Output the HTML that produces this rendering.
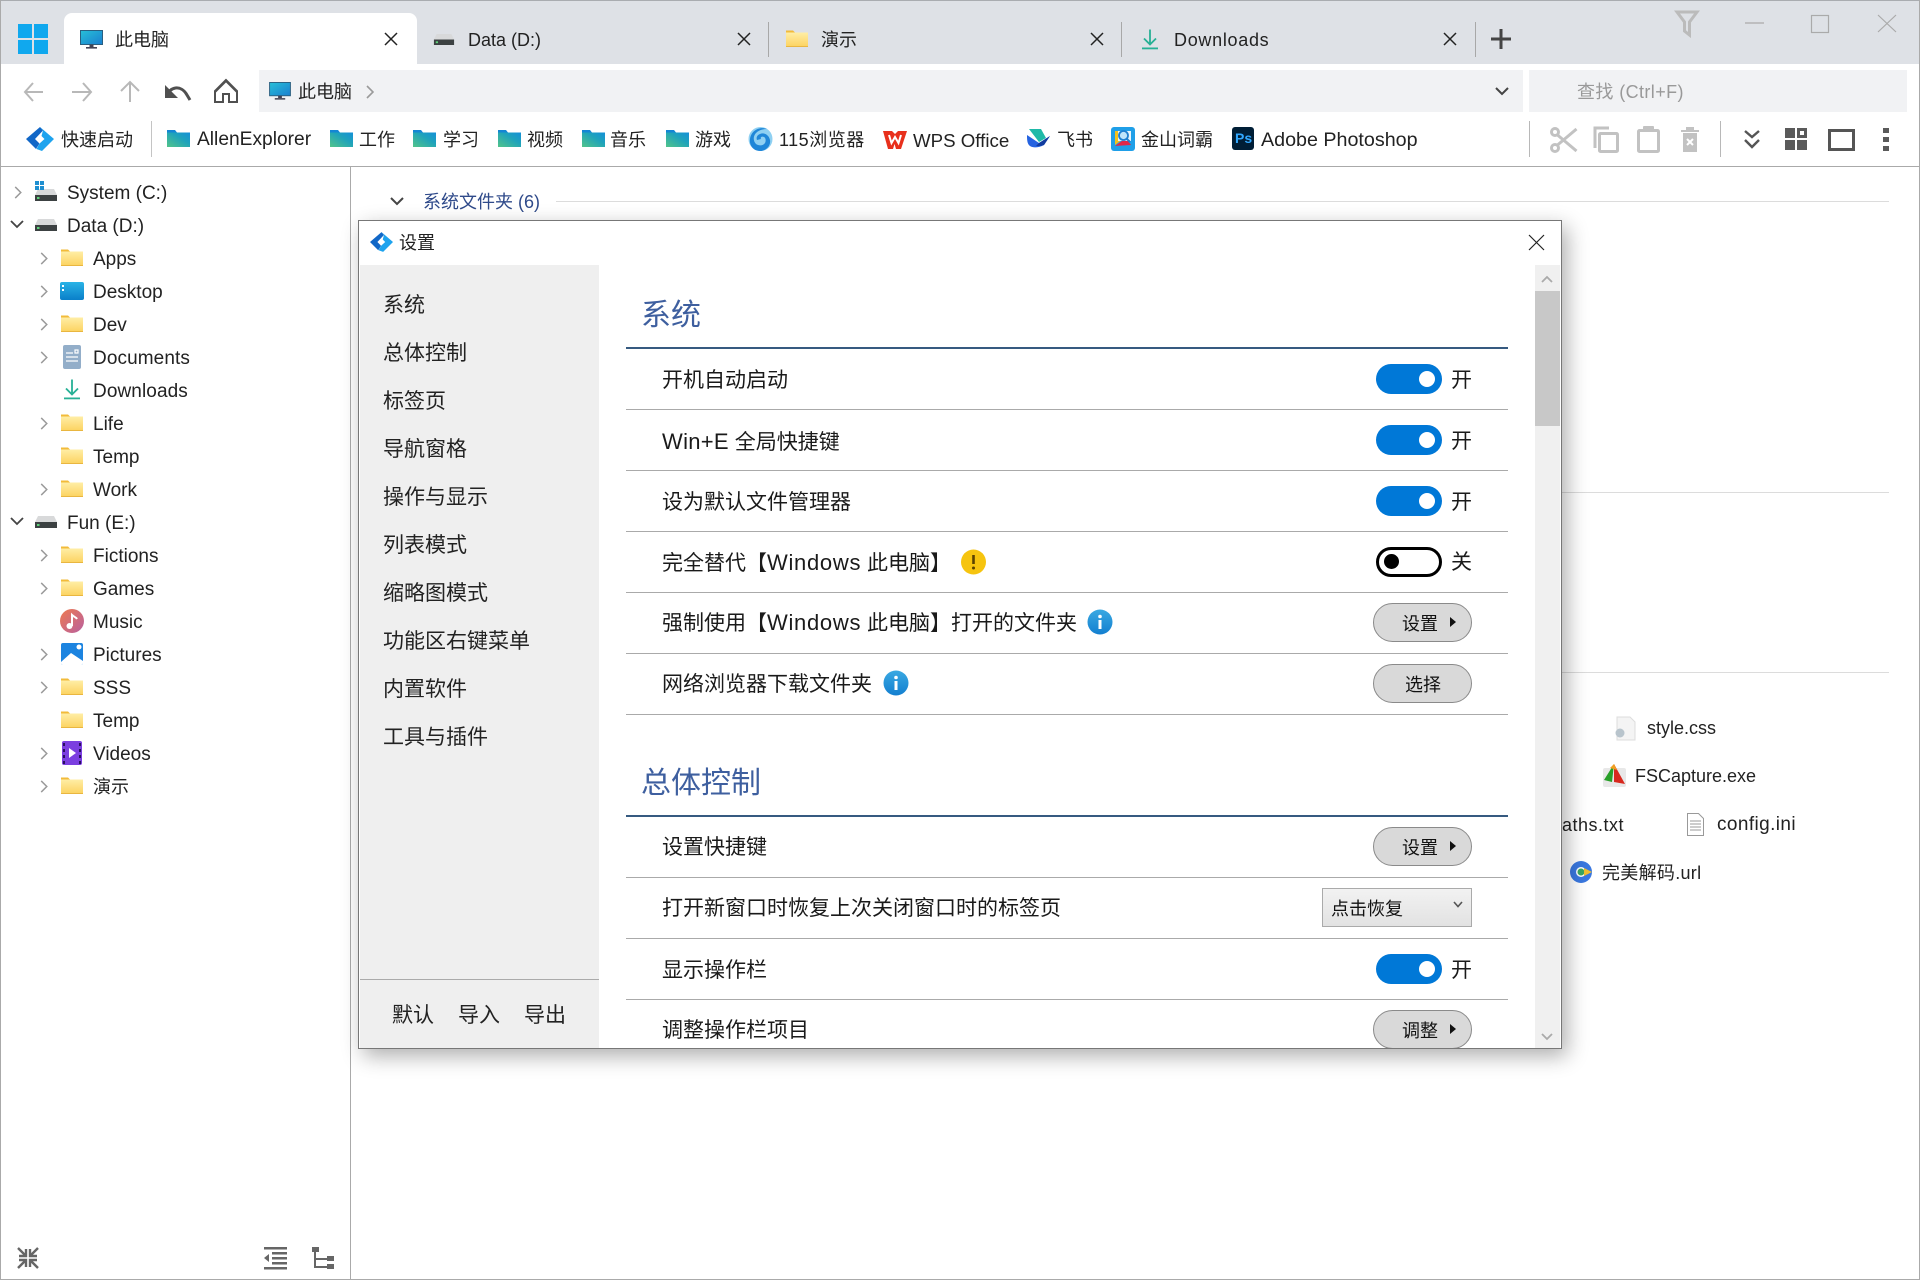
<!DOCTYPE html>
<html lang="zh-CN"><head><meta charset="utf-8"><title>AllenExplorer</title>
<style>
html,body{margin:0;padding:0;width:1920px;height:1280px;overflow:hidden;background:#fff}
body{position:relative;font-family:"Liberation Sans","Noto Sans CJK SC",sans-serif;color:#222}
.b{position:absolute}
.t{position:absolute;white-space:nowrap;line-height:0;font-size:18px}
svg.l{position:absolute;left:0;top:0;width:1920px;height:1280px;overflow:visible}
.tr{font-size:19px;margin-top:2px}
.n{font-size:21px;left:383px;color:#222;margin-top:2px}
.r{font-size:21px;left:662px;color:#1a1a1a;margin-top:2px}
.r span{font-size:22px}
.r span.w{letter-spacing:.7px}
.bk{font-size:18px;margin-top:1px}
.h{position:absolute;left:626px;width:882px;height:1px;background:#aaa}
.sec{font-size:30px;left:641px;color:#3e5f9f;margin-top:3px}
.hh{position:absolute;left:626px;width:882px;height:2px;background:#365a80}
.tg{position:absolute;left:1376px;width:66px;height:30px;border-radius:15px;background:#0078d7}
.tg i{position:absolute;left:43px;top:7px;width:16px;height:16px;border-radius:50%;background:#fff}
.tg.off{box-sizing:border-box;background:#fff;border:3.5px solid #000}
.tg.off i{left:5px;top:3.5px;width:15px;height:15px;background:#000}
.btn{position:absolute;box-sizing:border-box;left:1373px;width:99px;height:39px;border-radius:19.5px;background:#d9d9d9;border:1px solid #8a8a8a}
.btn i{position:absolute;left:76px;top:13px;width:0;height:0;border-left:6px solid #111;border-top:5px solid transparent;border-bottom:5px solid transparent}
.bt{font-size:18px;color:#111;margin-top:2px}
.f{font-size:18px;color:#222}
</style></head><body>

<div class="b" style="left:0;top:0;width:1920px;height:64px;background:#dee1e6"></div>
<div class="b" style="left:0;top:0;width:1920px;height:1px;background:#a9acb0"></div>
<div class="b" style="left:64px;top:13px;width:353px;height:51px;background:#fff;border-radius:8px 8px 0 0"></div>
<div class="b" style="left:259px;top:70px;width:1264px;height:42px;background:#f1f2f4"></div>
<div class="b" style="left:1529px;top:70px;width:378px;height:42px;background:#f1f2f4"></div>
<div class="b" style="left:0;top:166px;width:1920px;height:1px;background:#aaa"></div>
<div class="b" style="left:350px;top:166px;width:1px;height:1114px;background:#aaa"></div>
<div class="b" style="left:0;top:0;width:1px;height:1280px;background:#aaa"></div>
<div class="b" style="left:1919px;top:0;width:1px;height:1280px;background:#aaa"></div>
<div class="b" style="left:0;top:1279px;width:1920px;height:1px;background:#aaa"></div>
<div class="b" style="left:768px;top:22px;width:1px;height:35px;background:#a8a8a8"></div>
<div class="b" style="left:1121px;top:22px;width:1px;height:35px;background:#a8a8a8"></div>
<div class="b" style="left:1475px;top:22px;width:1px;height:35px;background:#a8a8a8"></div>
<div class="b" style="left:151px;top:121px;width:1px;height:36px;background:#c4c4c4"></div>
<div class="b" style="left:1529px;top:121px;width:1px;height:36px;background:#b8b8b8"></div>
<div class="b" style="left:1720px;top:121px;width:1px;height:36px;background:#b8b8b8"></div>
<div class="b" style="left:556px;top:201px;width:1333px;height:1px;background:#dcdcdc"></div>
<div class="b" style="left:1560px;top:492px;width:329px;height:1px;background:#dcdcdc"></div>
<div class="b" style="left:1560px;top:672px;width:329px;height:1px;background:#dcdcdc"></div>

<svg class="l" viewBox="0 0 1920 1280" xmlns="http://www.w3.org/2000/svg">
<defs>
<linearGradient id="gf" x1="0" y1="0" x2="0" y2="1"><stop offset="0" stop-color="#ffeea6"/><stop offset="1" stop-color="#fcd25f"/></linearGradient>
<linearGradient id="gt" x1="0" y1="1" x2="1" y2="0"><stop offset="0" stop-color="#52c48a"/><stop offset=".6" stop-color="#1fa3bb"/><stop offset="1" stop-color="#1590d8"/></linearGradient>
<linearGradient id="gm" x1="0" y1="0" x2="1" y2="1"><stop offset="0" stop-color="#27c0d8"/><stop offset="1" stop-color="#1a7fd0"/></linearGradient>
<linearGradient id="gd" x1="0" y1="0" x2="0" y2="1"><stop offset="0" stop-color="#2ab3e6"/><stop offset="1" stop-color="#0a7fc9"/></linearGradient>
<linearGradient id="gi" x1="0" y1="0" x2="0" y2="1"><stop offset="0" stop-color="#3aa9e2"/><stop offset="1" stop-color="#137fd0"/></linearGradient>
<linearGradient id="gmu" x1="0" y1="0" x2="1" y2="1"><stop offset="0" stop-color="#ee7a50"/><stop offset="1" stop-color="#b860a0"/></linearGradient>
<symbol id="folder" viewBox="0 0 22 17"><path d="M0 0.5h7l2 2H0z" fill="#f2bb3a"/><rect y="2.5" width="22" height="14.5" fill="url(#gf)"/><rect y="16" width="22" height="1" fill="#e9b640"/></symbol>
<symbol id="tfolder" viewBox="0 0 23 17"><path d="M0 0h8l2 2.5H0z" fill="#1486d4"/><rect y="2.5" width="23" height="14.5" fill="url(#gt)"/></symbol>
<symbol id="mon" viewBox="0 0 23 19"><rect x=".5" y=".5" width="22" height="14" fill="url(#gm)" stroke="#2a5f80"/><rect x="9.5" y="14.5" width="4" height="2.5" fill="#445"/><rect x="6" y="17" width="11" height="1.6" fill="#445"/></symbol>
<symbol id="drive" viewBox="0 0 22 12"><path d="M3 0h16l3 6H0z" fill="#d8d9da"/><rect y="6" width="22" height="6" fill="#3c4142"/><rect x="2" y="8" width="2.5" height="2" fill="#5fd07a"/></symbol>
<symbol id="dl" viewBox="0 0 16 20"><path d="M8 0v15M2 9l6 6 6-6" fill="none" stroke="#27b095" stroke-width="1.8"/><rect y="18" width="16" height="1.8" fill="#27b095"/></symbol>
<symbol id="logo" viewBox="0 0 28 24"><path d="M14 0 0 12l10 10 3.500-5.500L9 12l8-8.500z" fill="#1167c7"/><path d="M17 3.500 14 0l14 12-12 12-5.500-2 3-5.500 5-4.500-3-3z" fill="#1ea3ee"/><path d="M15.500 7l-4 5 3 1-1.500 4 4.500-5.500-3-1z" fill="#fff"/></symbol>
<symbol id="chev" viewBox="0 0 8 14"><path d="M1 1l6 6-6 6" fill="none" stroke="#9a9a9a" stroke-width="1.6"/></symbol>
<symbol id="xx" viewBox="0 0 14 14"><path d="M1 1l12 12M13 1L1 13" fill="none" stroke="#222" stroke-width="1.500"/></symbol>
</defs>

<!-- window tabs -->
<g fill="#10a8ee"><rect x="18" y="24" width="14" height="14"/><rect x="34" y="24" width="14" height="14"/><rect x="18" y="40" width="14" height="14"/><rect x="34" y="40" width="14" height="14"/></g>
<use href="#mon" x="80" y="30" width="23" height="19"/>
<use href="#xx" x="384" y="32" width="14" height="14"/>
<use href="#drive" x="433" y="34" width="22" height="11"/>
<use href="#xx" x="737" y="32" width="14" height="14"/>
<use href="#folder" x="786" y="30" width="22" height="17"/>
<use href="#xx" x="1090" y="32" width="14" height="14"/>
<use href="#dl" x="1142" y="29" width="16" height="21"/>
<use href="#xx" x="1443" y="32" width="14" height="14"/>
<path d="M1501 29v20M1491 39h20" stroke="#444" stroke-width="3"/>
<!-- window buttons -->
<path d="M1677 12h20l-7.500 10v13l-5-4v-9z" fill="none" stroke="#bbb" stroke-width="3"/>
<path d="M1745 23h19" stroke="#aaa" stroke-width="1.200"/>
<rect x="1811.500" y="15.500" width="17" height="17" fill="none" stroke="#aaa" stroke-width="1.200"/>
<path d="M1878 15l18 17M1896 15l-18 17" stroke="#aaa" stroke-width="1.200"/>
<!-- nav -->
<path d="M43 92H25M33 83l-8 9 8 9" fill="none" stroke="#b8b8b8" stroke-width="2"/>
<path d="M72 92h19M83 83l8 9-8 9" fill="none" stroke="#b8b8b8" stroke-width="2"/>
<path d="M130 102V83M121 91l9-9 9 9" fill="none" stroke="#b8b8b8" stroke-width="2"/>
<path d="M167 96c2-9 14-12 20-1l3 5" fill="none" stroke="#505050" stroke-width="3"/><path d="M165 85v13h13z" fill="#505050"/>
<path d="M226 80l-11 11v11h8v-8h6v8h8V91z M215 92l11-11 11 11" fill="none" stroke="#505050" stroke-width="2"/>
<use href="#mon" x="269" y="82" width="22" height="18"/>
<use href="#chev" x="366" y="85" width="8" height="14"/>
<path d="M1496 88l6 6 6-6" fill="none" stroke="#444" stroke-width="2"/>
<!-- bookmarks -->
<use href="#logo" x="26" y="127" width="28" height="24"/>
<use href="#tfolder" x="167" y="130" width="23" height="17"/>
<use href="#tfolder" x="330" y="130" width="23" height="17"/>
<use href="#tfolder" x="413" y="130" width="23" height="17"/>
<use href="#tfolder" x="498" y="130" width="23" height="17"/>
<use href="#tfolder" x="582" y="130" width="23" height="17"/>
<use href="#tfolder" x="666" y="130" width="23" height="17"/>
<!-- 115 swirl -->
<circle cx="760.500" cy="139" r="12" fill="#8fd0f2"/>
<path d="M767 129c-8-3-16 2-17 10-1 7 4 12 10 12 6 0 11-5 10-11-1-5-6-8-10-6-3 1-4 4-3 6l4-1c-1-2 1-3 3-2 2 1 2 4 1 6-2 3-6 3-9 1-3-3-3-8 0-11 3-3 7-4 11-4z" fill="#1f86d8"/>
<!-- WPS -->
<path d="M883 131h9l3 3 3-3h9l-6 18h-5l-1.500-5-1.500 5h-5z" fill="#e8301c"/><path d="M889 135l2.500 8 3.500-6 3.500 6 2.500-8" fill="none" stroke="#fff" stroke-width="2"/>
<!-- Feishu -->
<path d="M1029 129h12l5 9-7 4z" fill="#1fb9a8"/><path d="M1027 135l12 8 11-7-6 9c-6 3-11 3-14 1-3-2-3-7-3-11z" fill="#2563e0"/><path d="M1039 143l11-7-6 9c-3 1-5 1-8 1z" fill="#123c9e"/>
<!-- Jinshan -->
<rect x="1111" y="127" width="24" height="24" rx="3" fill="#1f9fe8"/><path d="M1115 131h8v8l-8 6z" fill="#f4c21c"/><path d="M1115 146l11-8 5 7z" fill="#e0284a"/><path d="M1118 131h13v10h-13z" fill="#e8f4fc"/><circle cx="1123.500" cy="135.500" r="4.500" fill="#bfe4fa" stroke="#1f7fd0" stroke-width="1.800"/><path d="M1127 139l3 3" stroke="#1f7fd0" stroke-width="2"/>
<rect x="1232" y="127" width="22" height="23" rx="3" fill="#001e36"/>
<!-- right tools -->
<g fill="none" stroke="#c2c2c2" stroke-width="3"><circle cx="1555" cy="132" r="3.500"/><circle cx="1555" cy="148" r="3.500"/><path d="M1557.500 135l19 16M1557.500 145l19-16"/>
<path d="M1609 128h-14v20"/><rect x="1599.500" y="133.500" width="18" height="18" rx="1"/>
<rect x="1638.500" y="130.500" width="20" height="21" rx="1"/></g>
<rect x="1643" y="126" width="11" height="6" rx="1" fill="#c2c2c2"/>
<path d="M1681 130h18v2h-18zM1686 127h8v3h-8zM1683 133h14v19h-14z" fill="#c2c2c2"/><path d="M1687 139l6 6M1693 139l-6 6" stroke="#fff" stroke-width="2"/>
<path d="M1745 131l7 6 7-6M1745 140l7 7 7-7" fill="none" stroke="#555" stroke-width="2.400"/>
<g fill="#5a5a5a"><rect x="1785" y="128" width="10" height="10"/><path d="M1797 128h10v10h-10zM1800 131v4h4v-4z" fill-rule="evenodd"/><rect x="1785" y="140" width="10" height="10"/><rect x="1797" y="140" width="10" height="10"/></g>
<rect x="1829.500" y="130.500" width="24" height="19" fill="none" stroke="#555" stroke-width="3"/>
<g fill="#5a5a5a"><rect x="1883" y="128" width="6" height="5"/><rect x="1883" y="137" width="6" height="5"/><rect x="1883" y="146" width="6" height="5"/></g>
<!-- tree chevrons -->
<use href="#chev" x="14" y="186" width="8" height="13"/>
<path d="M11 221l6 6 6-6" fill="none" stroke="#444" stroke-width="1.800"/>
<path d="M11 518l6 6 6-6" fill="none" stroke="#444" stroke-width="1.800"/>
<use href="#chev" x="40" y="252" width="8" height="13"/><use href="#chev" x="40" y="285" width="8" height="13"/><use href="#chev" x="40" y="318" width="8" height="13"/><use href="#chev" x="40" y="351" width="8" height="13"/><use href="#chev" x="40" y="417" width="8" height="13"/><use href="#chev" x="40" y="483" width="8" height="13"/><use href="#chev" x="40" y="549" width="8" height="13"/><use href="#chev" x="40" y="582" width="8" height="13"/><use href="#chev" x="40" y="648" width="8" height="13"/><use href="#chev" x="40" y="681" width="8" height="13"/><use href="#chev" x="40" y="747" width="8" height="13"/><use href="#chev" x="40" y="780" width="8" height="13"/>
<!-- tree icons -->
<use href="#drive" x="35" y="189" width="22" height="12"/>
<g fill="#1f8fd0"><rect x="35" y="181" width="4" height="4"/><rect x="40" y="181" width="4" height="4"/><rect x="35" y="186" width="4" height="4"/><rect x="40" y="186" width="4" height="4"/></g>
<use href="#drive" x="35" y="219" width="22" height="12"/>
<use href="#folder" x="61" y="249" width="22" height="17"/>
<rect x="60" y="282" width="24" height="18" rx="2" fill="url(#gd)"/><rect x="62" y="285" width="2" height="2" fill="#fff"/><rect x="62" y="289" width="2" height="2" fill="#fff"/>
<use href="#folder" x="61" y="315" width="22" height="17"/>
<rect x="63" y="345" width="18" height="24" rx="2" fill="#93aec9"/><path d="M66 353h7M66 357h12M66 361h12M75 350h3v3h-3z" stroke="#fff" stroke-width="1.200" fill="none"/>
<use href="#dl" x="64" y="379" width="16" height="21"/>
<use href="#folder" x="61" y="414" width="22" height="17"/>
<use href="#folder" x="61" y="447" width="22" height="17"/>
<use href="#folder" x="61" y="480" width="22" height="17"/>
<use href="#drive" x="35" y="516" width="22" height="12"/>
<use href="#folder" x="61" y="546" width="22" height="17"/>
<use href="#folder" x="61" y="579" width="22" height="17"/>
<circle cx="72" cy="621" r="12" fill="url(#gmu)"/><path d="M72 626v-11c2 2 4 2 5 4" fill="none" stroke="#fff" stroke-width="2"/><circle cx="69.500" cy="626" r="3" fill="#fff"/>
<rect x="61" y="643" width="22" height="22" rx="2" fill="#1c84e0"/><path d="M61 662l10-9 12 8v2a2 2 0 0 1-2 2H63a2 2 0 0 1-2-2z" fill="#fff"/><circle cx="79" cy="647" r="2.500" fill="#fff"/>
<use href="#folder" x="61" y="678" width="22" height="17"/>
<use href="#folder" x="61" y="711" width="22" height="17"/>
<rect x="62" y="741" width="20" height="24" rx="2" fill="#7b3fe0"/><path d="M69 748l7 5-7 5z" fill="#fff"/><g fill="#2a1060"><rect x="63" y="743" width="2" height="3"/><rect x="63" y="749" width="2" height="3"/><rect x="63" y="755" width="2" height="3"/><rect x="63" y="761" width="2" height="3"/><rect x="79" y="743" width="2" height="3"/><rect x="79" y="749" width="2" height="3"/><rect x="79" y="755" width="2" height="3"/><rect x="79" y="761" width="2" height="3"/></g>
<use href="#folder" x="61" y="777" width="22" height="17"/>
<!-- bottom -->
<g fill="none" stroke="#666" stroke-width="2.400"><path d="M18 1248l8 8M26 1249v7h-7M38 1248l-8 8M30 1249v7h7M18 1268l8-8M26 1267v-7h-7M38 1268l-8-8M30 1267v-7h7"/></g>
<g fill="#666"><rect x="264" y="1247" width="23" height="2.500"/><rect x="272" y="1252" width="15" height="2.500"/><rect x="272" y="1257" width="15" height="2.500"/><rect x="272" y="1262" width="15" height="2.500"/><rect x="264" y="1267" width="23" height="2.500"/><path d="M269 1254v8l-5-4z"/>
<rect x="312" y="1247" width="7" height="5"/><rect x="327" y="1256" width="7" height="5"/><rect x="327" y="1264" width="7" height="5"/><path d="M314 1252h2v6h11v2h-11v6h11v2h-13z"/></g>
<!-- section chevron -->
<path d="M391 198l6 6 6-6" fill="none" stroke="#444" stroke-width="2"/>
<!-- files -->
<path d="M1617 717h13l5 5v18h-18z" fill="#f4f4f4" stroke="#ddd"/><circle cx="1620" cy="733" r="4.500" fill="#b8c4cc"/>
<rect x="1603" y="768" width="23" height="19" rx="2" fill="#e8e8e8"/><path d="M1614 764l-10 16 8 2z" fill="#28a028"/><path d="M1614 764l11 20-11-2z" fill="#d8281e"/><path d="M1610 768l4-4 3 6z" fill="#f0a020"/>
<path d="M1687.500 813.500h11l5 5v17h-16z M1690 821h11M1690 824h11M1690 827h11M1690 830h11" fill="#fff" stroke="#999" stroke-width="1"/>
<circle cx="1581" cy="872" r="11" fill="#3a78e0"/><circle cx="1581" cy="872" r="5" fill="#fff"/><circle cx="1581" cy="872" r="3.500" fill="#3aa860"/><path d="M1584 868l8 4-8 4z" fill="#f0c030"/>
</svg>

<!-- top texts -->
<div class="t" style="left:115px;top:40px">此电脑</div>
<div class="t" style="left:468px;top:40px">Data (D:)</div>
<div class="t" style="left:821px;top:40px">演示</div>
<div class="t" style="left:1174px;top:40px;letter-spacing:.7px">Downloads</div>
<div class="t" style="left:298px;top:92px">此电脑</div>
<div class="t" style="left:1577px;top:92px;color:#999;letter-spacing:.4px">查找 (Ctrl+F)</div>
<div class="t bk" style="left:61px;top:139px">快速启动</div>
<div class="t bk" style="left:197px;top:139px;font-size:19.200px">AllenExplorer</div>
<div class="t bk" style="left:359px;top:139px">工作</div>
<div class="t bk" style="left:443px;top:139px">学习</div>
<div class="t bk" style="left:527px;top:139px">视频</div>
<div class="t bk" style="left:610px;top:139px">音乐</div>
<div class="t bk" style="left:695px;top:139px">游戏</div>
<div class="t bk" style="left:779px;top:139px;letter-spacing:.5px">115浏览器</div>
<div class="t bk" style="left:913px;top:140px;font-size:18.700px">WPS Office</div>
<div class="t bk" style="left:1057px;top:139px">飞书</div>
<div class="t bk" style="left:1141px;top:139px">金山词霸</div>
<div class="t bk" style="left:1261px;top:139px;font-size:19.700px">Adobe Photoshop</div>
<div class="t" style="left:1235px;top:138px;font-size:14px;font-weight:bold;color:#31a8ff">Ps</div>
<!-- tree -->
<div class="t tr" style="left:67px;top:192px">System (C:)</div>
<div class="t tr" style="left:67px;top:225px">Data (D:)</div>
<div class="t tr" style="left:93px;top:258px">Apps</div>
<div class="t tr" style="left:93px;top:291px">Desktop</div>
<div class="t tr" style="left:93px;top:324px">Dev</div>
<div class="t tr" style="left:93px;top:357px;letter-spacing:.1px">Documents</div>
<div class="t tr" style="left:93px;top:390px;letter-spacing:.1px">Downloads</div>
<div class="t tr" style="left:93px;top:423px">Life</div>
<div class="t tr" style="left:93px;top:456px">Temp</div>
<div class="t tr" style="left:93px;top:489px">Work</div>
<div class="t tr" style="left:67px;top:522px">Fun (E:)</div>
<div class="t tr" style="left:93px;top:555px">Fictions</div>
<div class="t tr" style="left:93px;top:588px">Games</div>
<div class="t tr" style="left:93px;top:621px">Music</div>
<div class="t tr" style="left:93px;top:654px">Pictures</div>
<div class="t tr" style="left:93px;top:687px">SSS</div>
<div class="t tr" style="left:93px;top:720px">Temp</div>
<div class="t tr" style="left:93px;top:753px">Videos</div>
<div class="t tr" style="left:93px;top:785px;font-size:18px">演示</div>
<div class="t" style="left:423px;top:202px;color:#2f4a8a">系统文件夹 (6)</div>
<!-- files -->
<div class="t f" style="left:1647px;top:728px">style.css</div>
<div class="t f" style="left:1635px;top:776px">FSCapture.exe</div>
<div class="t f" style="left:1562px;top:825px;letter-spacing:.5px">aths.txt</div>
<div class="t f" style="left:1717px;top:825px;font-size:19px;letter-spacing:.4px">config.ini</div>
<div class="t f" style="left:1602px;top:873px;letter-spacing:.3px">完美解码.url</div>

<!-- dialog -->
<div class="b" style="box-sizing:border-box;left:358px;top:220px;width:1204px;height:829px;background:#fff;border:1.500px solid #777;box-shadow:5px 7px 20px rgba(0,0,0,.32)"></div>
<div class="b" style="left:0;top:0;width:1920px;height:1048px;overflow:hidden">
<div class="b" style="left:360px;top:265px;width:239px;height:784px;background:#efefef"></div>
<div class="b" style="left:360px;top:979px;width:239px;height:1px;background:#aaa"></div>
<div class="b" style="left:1535px;top:265px;width:25px;height:784px;background:#f0f0f0"></div>
<div class="b" style="left:1535px;top:291px;width:25px;height:135px;background:#c8c8c8"></div>
<div class="t" style="left:399px;top:243px">设置</div>
<div class="t n" style="top:304px">系统</div>
<div class="t n" style="top:352px">总体控制</div>
<div class="t n" style="top:400px">标签页</div>
<div class="t n" style="top:448px">导航窗格</div>
<div class="t n" style="top:496px">操作与显示</div>
<div class="t n" style="top:544px">列表模式</div>
<div class="t n" style="top:592px">缩略图模式</div>
<div class="t n" style="top:640px">功能区右键菜单</div>
<div class="t n" style="top:688px">内置软件</div>
<div class="t n" style="top:736px">工具与插件</div>
<div class="t" style="left:392px;top:1016px;font-size:21px">默认</div>
<div class="t" style="left:458px;top:1016px;font-size:21px">导入</div>
<div class="t" style="left:524px;top:1016px;font-size:21px">导出</div>

<div class="t sec" style="top:313px">系统</div>
<div class="hh" style="top:347px"></div>
<div class="t r" style="top:379px">开机自动启动</div>
<div class="h" style="top:409px"></div>
<div class="t r" style="top:440px"><span style="letter-spacing:.3px">Win+E</span> 全局快捷键</div>
<div class="h" style="top:470px"></div>
<div class="t r" style="top:501px">设为默认文件管理器</div>
<div class="h" style="top:531px"></div>
<div class="t r" style="top:561px">完全替代【<span class="w">Windows</span> 此电脑】</div>
<div class="h" style="top:592px"></div>
<div class="t r" style="top:621px">强制使用【<span class="w">Windows</span> 此电脑】打开的文件夹</div>
<div class="h" style="top:653px"></div>
<div class="t r" style="top:683px">网络浏览器下载文件夹</div>
<div class="h" style="top:714px"></div>
<div class="t sec" style="top:781px">总体控制</div>
<div class="hh" style="top:815px"></div>
<div class="t r" style="top:846px">设置快捷键</div>
<div class="h" style="top:877px"></div>
<div class="t r" style="top:907px">打开新窗口时恢复上次关闭窗口时的标签页</div>
<div class="h" style="top:938px"></div>
<div class="t r" style="top:969px">显示操作栏</div>
<div class="h" style="top:999px"></div>
<div class="t r" style="top:1029px">调整操作栏项目</div>

<div class="tg" style="top:364px"><i></i></div><div class="t r" style="left:1451px;top:379px">开</div>
<div class="tg" style="top:425px"><i></i></div><div class="t r" style="left:1451px;top:440px">开</div>
<div class="tg" style="top:486px"><i></i></div><div class="t r" style="left:1451px;top:501px">开</div>
<div class="tg off" style="top:547px"><i></i></div><div class="t r" style="left:1451px;top:561px">关</div>
<div class="tg" style="top:954px"><i></i></div><div class="t r" style="left:1451px;top:969px">开</div>

<div class="btn" style="top:603px"><i></i></div><div class="t bt" style="left:1402px;top:622px">设置</div>
<div class="btn" style="top:664px"></div><div class="t bt" style="left:1405px;top:683px">选择</div>
<div class="btn" style="top:827px"><i></i></div><div class="t bt" style="left:1402px;top:846px">设置</div>
<div class="btn" style="top:1010px"><i></i></div><div class="t bt" style="left:1402px;top:1029px">调整</div>
<div class="b" style="box-sizing:border-box;left:1322px;top:888px;width:150px;height:39px;background:linear-gradient(#f2f2f2,#e2e2e2);border:1px solid #aaa"></div>
<div class="t bt" style="left:1331px;top:907px">点击恢复</div>

<svg class="l" viewBox="0 0 1920 1280" xmlns="http://www.w3.org/2000/svg">
<use href="#logo" x="370" y="232" width="23" height="20"/>
<path d="M1529 235l15 15M1544 235l-15 15" stroke="#222" stroke-width="1.200"/>
<path d="M1542 282l5-5 5 5" fill="none" stroke="#aaa" stroke-width="1.800"/>
<path d="M1542 1034l5 5 5-5" fill="none" stroke="#aaa" stroke-width="1.800"/>
<path d="M1454 902l4 4.500 4-4.500" fill="none" stroke="#555" stroke-width="1.600"/>
<circle cx="973.500" cy="562" r="12.500" fill="#f6c40f"/><path d="M973.500 555v9" stroke="#5a4200" stroke-width="2.600"/><circle cx="973.500" cy="568" r="1.500" fill="#5a4200"/>
<circle cx="1100" cy="622" r="12.500" fill="url(#gi)"/><rect x="1098.500" y="620" width="3" height="9" fill="#fff"/><circle cx="1100" cy="616.500" r="1.800" fill="#fff"/>
<circle cx="896" cy="683" r="12.500" fill="url(#gi)"/><rect x="894.500" y="681" width="3" height="9" fill="#fff"/><circle cx="896" cy="677.500" r="1.800" fill="#fff"/>
</svg>
</div>
</body></html>
